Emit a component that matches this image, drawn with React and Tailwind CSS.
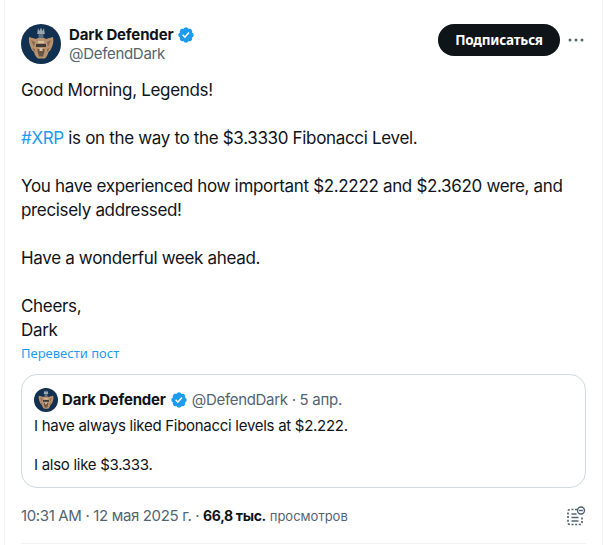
function Verified({ className }) {
  return (
    <svg viewBox="0 0 22 22" className={className} fill="#1d9bf0">
      <path d="M20.396 11c-.018-.646-.215-1.275-.57-1.816-.354-.54-.852-.972-1.438-1.246.223-.607.27-1.264.14-1.897-.131-.634-.437-1.218-.882-1.687-.47-.445-1.053-.75-1.687-.882-.633-.13-1.29-.083-1.897.14-.273-.587-.704-1.086-1.245-1.44S11.647 1.62 11 1.604c-.646.017-1.273.213-1.813.568s-.969.854-1.24 1.44c-.608-.223-1.267-.272-1.902-.14-.635.13-1.22.436-1.69.882-.445.47-.749 1.055-.878 1.688-.13.633-.08 1.29.144 1.896-.587.274-1.087.705-1.443 1.245-.356.54-.555 1.17-.574 1.817.02.647.218 1.276.574 1.817.356.54.856.972 1.443 1.245-.224.606-.274 1.263-.144 1.896.13.634.433 1.218.877 1.688.47.443 1.054.747 1.687.878.633.132 1.29.084 1.897-.136.274.586.705 1.084 1.246 1.439.54.354 1.17.551 1.816.569.647-.016 1.276-.213 1.817-.567s.972-.854 1.245-1.44c.604.239 1.266.296 1.903.164.636-.132 1.22-.447 1.68-.907.46-.46.776-1.044.908-1.681s.075-1.299-.165-1.903c.586-.274 1.084-.705 1.439-1.246.354-.54.551-1.17.569-1.816zM9.662 14.85l-3.429-3.428 1.293-1.302 2.072 2.072 4.4-4.794 1.347 1.246z" />
    </svg>
  );
}

// crest drawing: crown over a winged bear head
function Avatar({ className }) {
  return (
    <svg viewBox="0 0 40 40" className={className}>
      <circle cx="20" cy="20" r="20" fill="#12304f" />
      <path d="M17 4l1.5 3L20 3.5 21.500 7 23 4l.8 6h-7.600z" fill="#9aa5b1" />
      <path d="M17.500 10h5v4h-5z" fill="#5d6f80" />
      <path d="M8 13c2 1 5 1 7 2l2-1h6l2 1c2-1 5-1 7-2 1 4 0 8-1.500 11-.5 2-2 3-3 4-.7 3-2 5-3.500 6.500h-7C15 33 13.700 31 13 28c-1-1-2.500-2-3-4-1.500-3-2.500-7-2-11z" fill="#b8926e" />
      <path d="M10 16l4 2-1 5zM30 16l-4 2 1 5zM11 24l3 1 0 3zM29 24l-3 1 0 3z" fill="#8a6b50" />
      <path d="M15 20h10v3H15z" fill="#3d3a3a" />
      <path d="M17 17h6v2h-6z" fill="#d8c2a8" />
      <path d="M16.500 25h7v2.500l-1.500 5h-4l-1.500-5z" fill="#6a5444" />
      <path d="M18.500 24h3v3h-3z" fill="#d8c2a8" />
    </svg>
  );
}

export default function App() {
  return (
    <div className="w-[604px] h-[545px] bg-white overflow-hidden font-['Inter','Noto_Sans',sans-serif]">
      <div className="ml-1 w-[599px] h-[545px] border-x border-[#eff3f4] pl-4 pr-4 pt-6">
        <div className="flex justify-between h-10">
          <div className="flex items-center gap-2">
            <Avatar className="w-10 h-10" />
            <div className="flex flex-col tracking-[-0.15px]">
              <div className="flex items-center gap-1 text-[15px] leading-5 pt-px font-bold text-[#0f1419]">
                Dark Defender <Verified className="w-[18px] h-[18px]" />
              </div>
              <div className="text-[15px] leading-5 tracking-[-0.3px] text-[#536471] -mt-px">@DefendDark</div>
            </div>
          </div>
          <div className="flex items-start">
            <button className="h-8 w-[122px] rounded-full bg-[#0f1419] text-white text-[13.500px] leading-8 font-bold font-['Noto_Sans',sans-serif] tracking-[-0.2px]">Подписаться</button>
            <svg viewBox="0 0 20 20" className="w-5 h-5 ml-1.5 mt-1.5" fill="#536471">
              <circle cx="4" cy="10" r="1.500" /><circle cx="10" cy="10" r="1.500" /><circle cx="16" cy="10" r="1.500" />
            </svg>
          </div>
        </div>

        <div className="mt-[14px] text-[17px] leading-6 tracking-[-0.33px] text-[#0f1419]">
          <p>Good Morning, Legends!</p>
          <p className="mt-6"><span className="text-[#1d9bf0]">#XRP</span> is on the way to the $3.3330 Fibonacci Level.</p>
          <p className="mt-6">You have experienced how important $2.2222 and $2.3620 were, and precisely addressed!</p>
          <p className="mt-6">Have a wonderful week ahead.</p>
          <p className="mt-6">Cheers,</p>
          <p>Dark</p>
        </div>

        <div className="mt-[3px] text-[13px] leading-4 text-[#1d9bf0] font-['Noto_Sans',sans-serif]">Перевести пост</div>

        <div className="mt-[13px] h-[114px] border border-[#cfd9de] rounded-2xl px-3 pt-[13px]">
          <div className="flex items-center text-[15px] leading-5 tracking-[-0.2px]">
            <Avatar className="w-6 h-6 mr-1" />
            <span className="font-bold text-[#0f1419]">Dark Defender</span>
            <Verified className="w-[18px] h-[18px] ml-1" />
            <span className="text-[#536471] ml-1 tracking-[-0.3px]">@DefendDark · 5 апр.</span>
          </div>
          <p className="mt-1 text-[15px] leading-5 tracking-[-0.28px] text-[#0f1419]">I have always liked Fibonacci levels at $2.222.</p>
          <p className="mt-[19px] text-[15px] leading-5 tracking-[-0.28px] text-[#0f1419]">I also like $3.333.</p>
        </div>

        <div className="mt-[18px] flex items-center justify-between h-5">
          <div className="text-[15px] leading-5 tracking-[-0.35px] text-[#536471]">
            10:31 AM · 12 мая 2025 г. · <span className="font-bold text-[#0f1419] text-[14px]">66,8 тыс.</span> <span className="text-[13px] tracking-normal">просмотров</span>
          </div>
          <svg viewBox="0 0 20 20" className="w-5 h-5" fill="none" stroke="#536471" strokeWidth="1.700">
            <path d="M11 3.500H4a2 2 0 0 0-2 2v11a2 2 0 0 0 2 2h10a2 2 0 0 0 2-2v-6" strokeDasharray="2 1.600" />
            <path d="M5.500 8h5M5.500 11.500h7M5.500 15h7" strokeWidth="1.500" />
            <circle cx="15" cy="4.500" r="3.500" strokeWidth="1.400" />
            <path d="M13 4.500h4" strokeWidth="1.400" />
          </svg>
        </div>

        <div className="mt-[17px] border-t border-[#eff3f4]" />
      </div>
    </div>
  );
}
